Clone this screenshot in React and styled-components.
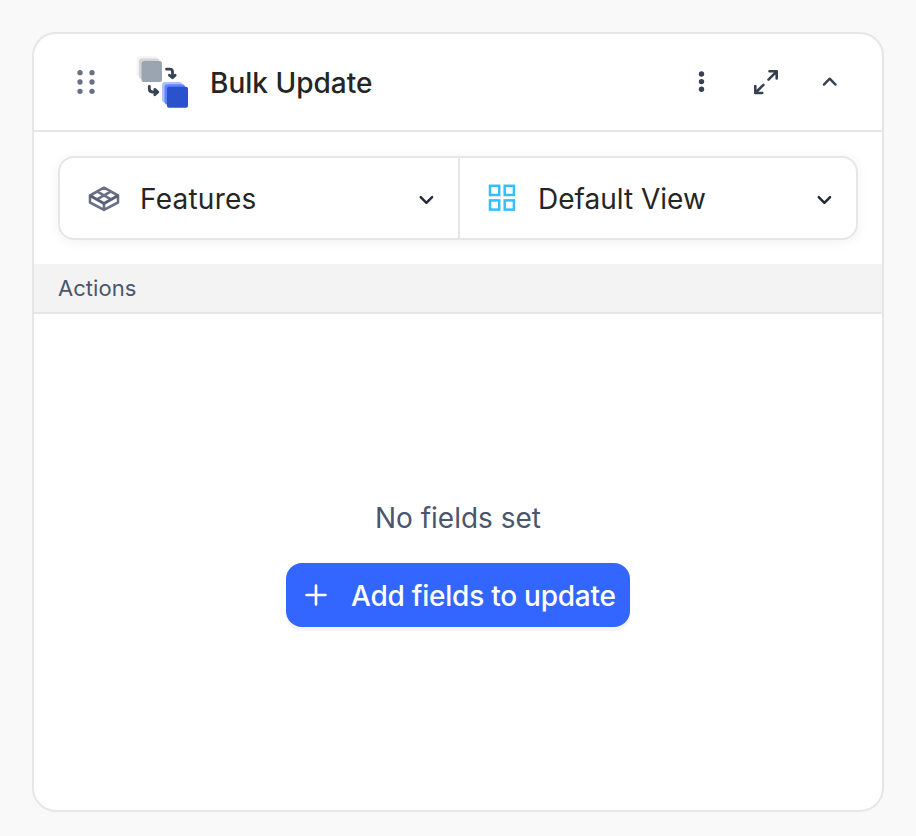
import React from "react";
import styled, { createGlobalStyle } from "styled-components";

const Global = createGlobalStyle`
  * { box-sizing: border-box; }
  body { margin: 0; background: #f9f9f9; font-family: Inter, "Liberation Sans", sans-serif; }
  button { font: inherit; border: 0; background: none; padding: 0; }
`;

const Page = styled.main`
  display: flex;
  height: 836px;
  padding: 32px 32px 24px;
`;

const Card = styled.section`
  display: flex;
  flex-direction: column;
  flex: 1;
  border: 2px solid #e6e6e6;
  border-radius: 24px;
  background: #fff;
  overflow: hidden;
`;

const Header = styled.header`
  display: flex;
  align-items: center;
  height: 98px;
  padding-left: 38px;
  padding-right: 36px;
  border-bottom: 2px solid #e6e6e6;
`;

const Icon = styled.svg`
  display: block;
  flex: none;
  fill: none;
  overflow: visible;
`;

const Logo = styled(Icon)`
  margin-left: 36px;
`;

const Label = styled.span`
  padding-top: ${(p) => p.$drop || 0}px;
  color: ${(p) => p.$color || "#252525"};
  font-size: ${(p) => p.$size || 28}px;
  font-weight: ${(p) => p.$weight || 400};
  line-height: 40px;
  letter-spacing: ${(p) => p.$track || 0}px;
  white-space: nowrap;
`;

const Title = styled(Label)`
  margin-left: 18px;
  margin-right: auto;
`;

const Tools = styled.div`
  display: flex;
  gap: 32px;
`;

const IconButton = styled.button`
  display: block;
  width: 32px;
  height: 32px;
`;

const Pickers = styled.div`
  display: flex;
  height: 84px;
  margin: 24px;
  border: 2px solid #e6e6e6;
  border-radius: 16px;
  box-shadow: 0 2px 12px rgba(0, 0, 0, 0.06);
`;

const Picker = styled.button`
  display: flex;
  align-items: center;
  width: 398px;
  padding: 0 16px 0 28px;
  text-align: left;

  & + & { border-left: 2px solid #e6e6e6; }
  ${Label} { flex: 1; margin-left: ${(p) => p.$gap}px; }
`;

const SectionBar = styled.div`
  display: flex;
  align-items: center;
  height: 50px;
  padding-left: 24px;
  background: #f3f3f3;
  border-bottom: 2px solid #e6e6e6;
`;

const Empty = styled.div`
  display: flex;
  flex-direction: column;
  align-items: center;
  padding-top: 184px;
  gap: 25px;
`;

const AddButton = styled.button`
  display: flex;
  align-items: center;
  width: 344px;
  height: 64px;
  padding-left: 14px;
  gap: 19px;
  border-radius: 16px;
  background: #3366ff;
  box-shadow: 0 4px 0 #f5f5f5;
`;

function Grip() {
  return (
    <Icon width="28" height="32" viewBox="72 66 28 32">
      {[80, 92].map((x) => [72.7, 82, 91.3].map((y) => (
        <circle key={`${x}-${y}`} cx={x} cy={y} r="2.65" fill="#697084" />
      )))}
    </Icon>
  );
}

function BulkLogo() {
  return (
    <Logo width="56" height="56" viewBox="136 54 56 56">
      <rect x="136.6" y="56.3" width="20.5" height="20.5" rx="3" fill="#f3f3f3" />
      <rect x="139" y="58.6" width="20.5" height="20.5" rx="3" fill="#d3d4d6" />
      <rect x="141.5" y="61" width="20.5" height="21" rx="2.6" fill="#9ba5b1" />
      <rect x="162" y="82" width="20.5" height="20.5" rx="3" fill="#adc0ff" />
      <rect x="164.5" y="84.3" width="20.5" height="20.5" rx="3" fill="#5c85ff" />
      <rect x="167" y="86.8" width="21" height="21" rx="2" fill="#2952cc" />
      <g stroke="#374151" strokeWidth="2.8" strokeLinecap="round" strokeLinejoin="round">
        <path d="M166.5 69.2h3.3q2.7 0 2.7 2.7v5.5M169.4 75.2l3.1 2.6 2.7-2.6" />
        <path d="M149.3 86.5v2.3q0 3.2 3.2 3.2h5M154.8 89.4l3 2.6-3 2.7" />
      </g>
    </Logo>
  );
}

function Chevron({ up = false, color = "#1f2937" }) {
  return (
    <Icon width="32" height="32" viewBox="0 0 32 32">
      <path d={up ? "M9.9 18.6l5.8-5.9 5.8 5.9" : "M10.7 15.1l5.7 5.8 5.7-5.8"} stroke={color} strokeWidth="2.4" strokeLinecap="round" strokeLinejoin="round" />
    </Icon>
  );
}

export default function App() {
  return (
    <>
      <Global />
      <Page>
        <Card>
          <Header>
            <Grip />
            <BulkLogo />
            <Title $weight={500} $drop={2}>Bulk Update</Title>
            <Tools>
              <IconButton aria-label="More">
                <Icon width="32" height="32" viewBox="686 66 32 32">
                  {[74, 81.6, 89.2].map((y) => <circle key={y} cx="701.5" cy={y} r="2.7" fill="#374151" />)}
                </Icon>
              </IconButton>
              <IconButton aria-label="Expand">
                <Icon width="32" height="32" viewBox="750 66 32 32" stroke="#374151" strokeWidth="2.6" strokeLinecap="round" strokeLinejoin="round">
                  <path d="M769.5 71.3h7.2v7.2M776.7 71.3l-8.2 8.3M755.3 86.1v6.9h6.9M755.3 93l8.1-8.2" />
                </Icon>
              </IconButton>
              <IconButton aria-label="Collapse"><Chevron up color="#374151" /></IconButton>
            </Tools>
          </Header>
          <Pickers>
            <Picker $gap={20}>
              <Icon width="32" height="28" viewBox="88 184 32 28" stroke="#697084" strokeWidth="2.6" strokeLinejoin="round">
                <path d="M104 187.7l14 7.8v7L104 209.9l-14-7.4v-7zM104 203.6v6M97 191.4l14 8M111 191.4l-14 8" />
                <path d="M89.9 195.5l14.1 8 14.1-8" stroke="#596177" strokeWidth="2.9" />
              </Icon>
              <Label $drop={2} $track={0.24}>Features</Label>
              <Chevron />
            </Picker>
            <Picker $gap={22}>
              <Icon width="28" height="28" viewBox="0 0 28 28" stroke="#33bfff" strokeWidth="2.5">
                {[2, 16.7].map((x) => [1.8, 16.4].map((y) => <rect key={`${x}-${y}`} x={x} y={y} width="9.2" height="9.2" />))}
              </Icon>
              <Label $drop={2}>Default View</Label>
              <Chevron />
            </Picker>
          </Pickers>
          <SectionBar><Label $size={22} $color="#4b556b" $track={0.05}>Actions</Label></SectionBar>
          <Empty>
            <Label $color="#4b556b">No fields set</Label>
            <AddButton>
              <Icon width="32" height="32" viewBox="0 0 32 32" stroke="#fff" strokeWidth="2.6" strokeLinecap="round">
                <path d="M16 6.5v19M6.5 16h19" />
              </Icon>
              <Label $color="#fff" $weight={500} $drop={2} $track={-0.24}>Add fields to update</Label>
            </AddButton>
          </Empty>
        </Card>
      </Page>
    </>
  );
}
